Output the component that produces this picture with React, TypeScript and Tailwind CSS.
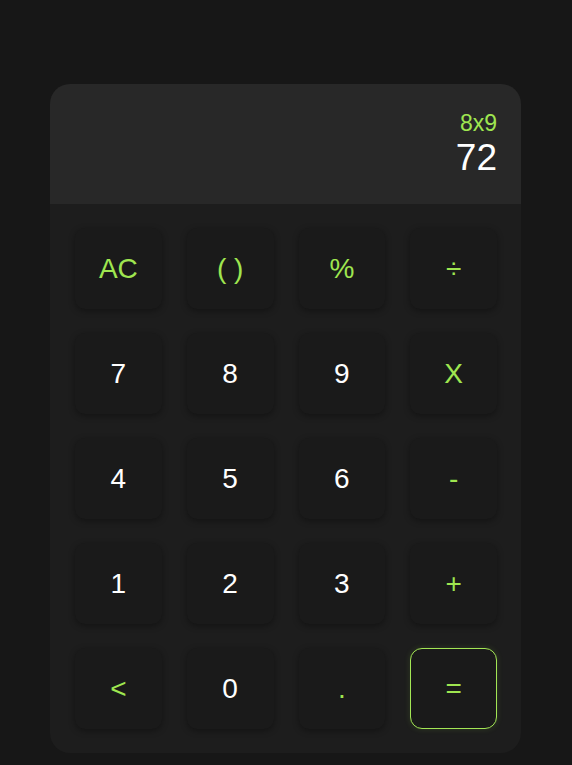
const keys: { label: string; accent?: boolean; equals?: boolean }[] = [
  { label: 'AC', accent: true },
  { label: '( )', accent: true },
  { label: '%', accent: true },
  { label: '÷', accent: true },
  { label: '7' },
  { label: '8' },
  { label: '9' },
  { label: 'X', accent: true },
  { label: '4' },
  { label: '5' },
  { label: '6' },
  { label: '-', accent: true },
  { label: '1' },
  { label: '2' },
  { label: '3' },
  { label: '+', accent: true },
  { label: '<', accent: true },
  { label: '0' },
  { label: '.', accent: true },
  { label: '=', accent: true, equals: true },
]

export default function App() {
  return (
    <div
      className="min-h-[765px] w-full bg-[#171717] pt-[84px]"
      style={{ fontFamily: '"Liberation Sans", Arial, sans-serif' }}
    >
      <div className="ml-[50px] w-[471px]">
        <div className="flex h-[120px] flex-col items-end justify-start rounded-t-[20px] bg-[#282828] px-6 pt-[26px]">
          <div className="text-[23px] leading-[26px] text-[#9fe650]">8x9</div>
          <div className="text-[37px] leading-[44px] text-white">72</div>
        </div>
        <div className="grid grid-cols-4 gap-x-[25px] gap-y-[24px] rounded-b-[20px] bg-[#1d1d1d] p-6 pl-[25px]">
          {keys.map((k) => (
            <button
              key={k.label}
              className={
                k.equals
                  ? 'flex h-[81px] items-center justify-center rounded-[12px] border border-[#a3e655] bg-[#1a1a1a] text-[28px] text-[#9fe650] shadow-[0_0_6px_rgba(155,226,76,0.15)]'
                  : k.accent
                    ? 'flex h-[81px] items-center justify-center rounded-[10px] bg-[#1a1a1a] text-[28px] text-[#9fe650] shadow-[0_2px_6px_rgba(0,0,0,0.35)]'
                    : 'flex h-[81px] items-center justify-center rounded-[10px] bg-[#1a1a1a] text-[28px] text-white shadow-[0_2px_6px_rgba(0,0,0,0.35)]'
              }
            >
              {k.label}
            </button>
          ))}
        </div>
      </div>
    </div>
  )
}
